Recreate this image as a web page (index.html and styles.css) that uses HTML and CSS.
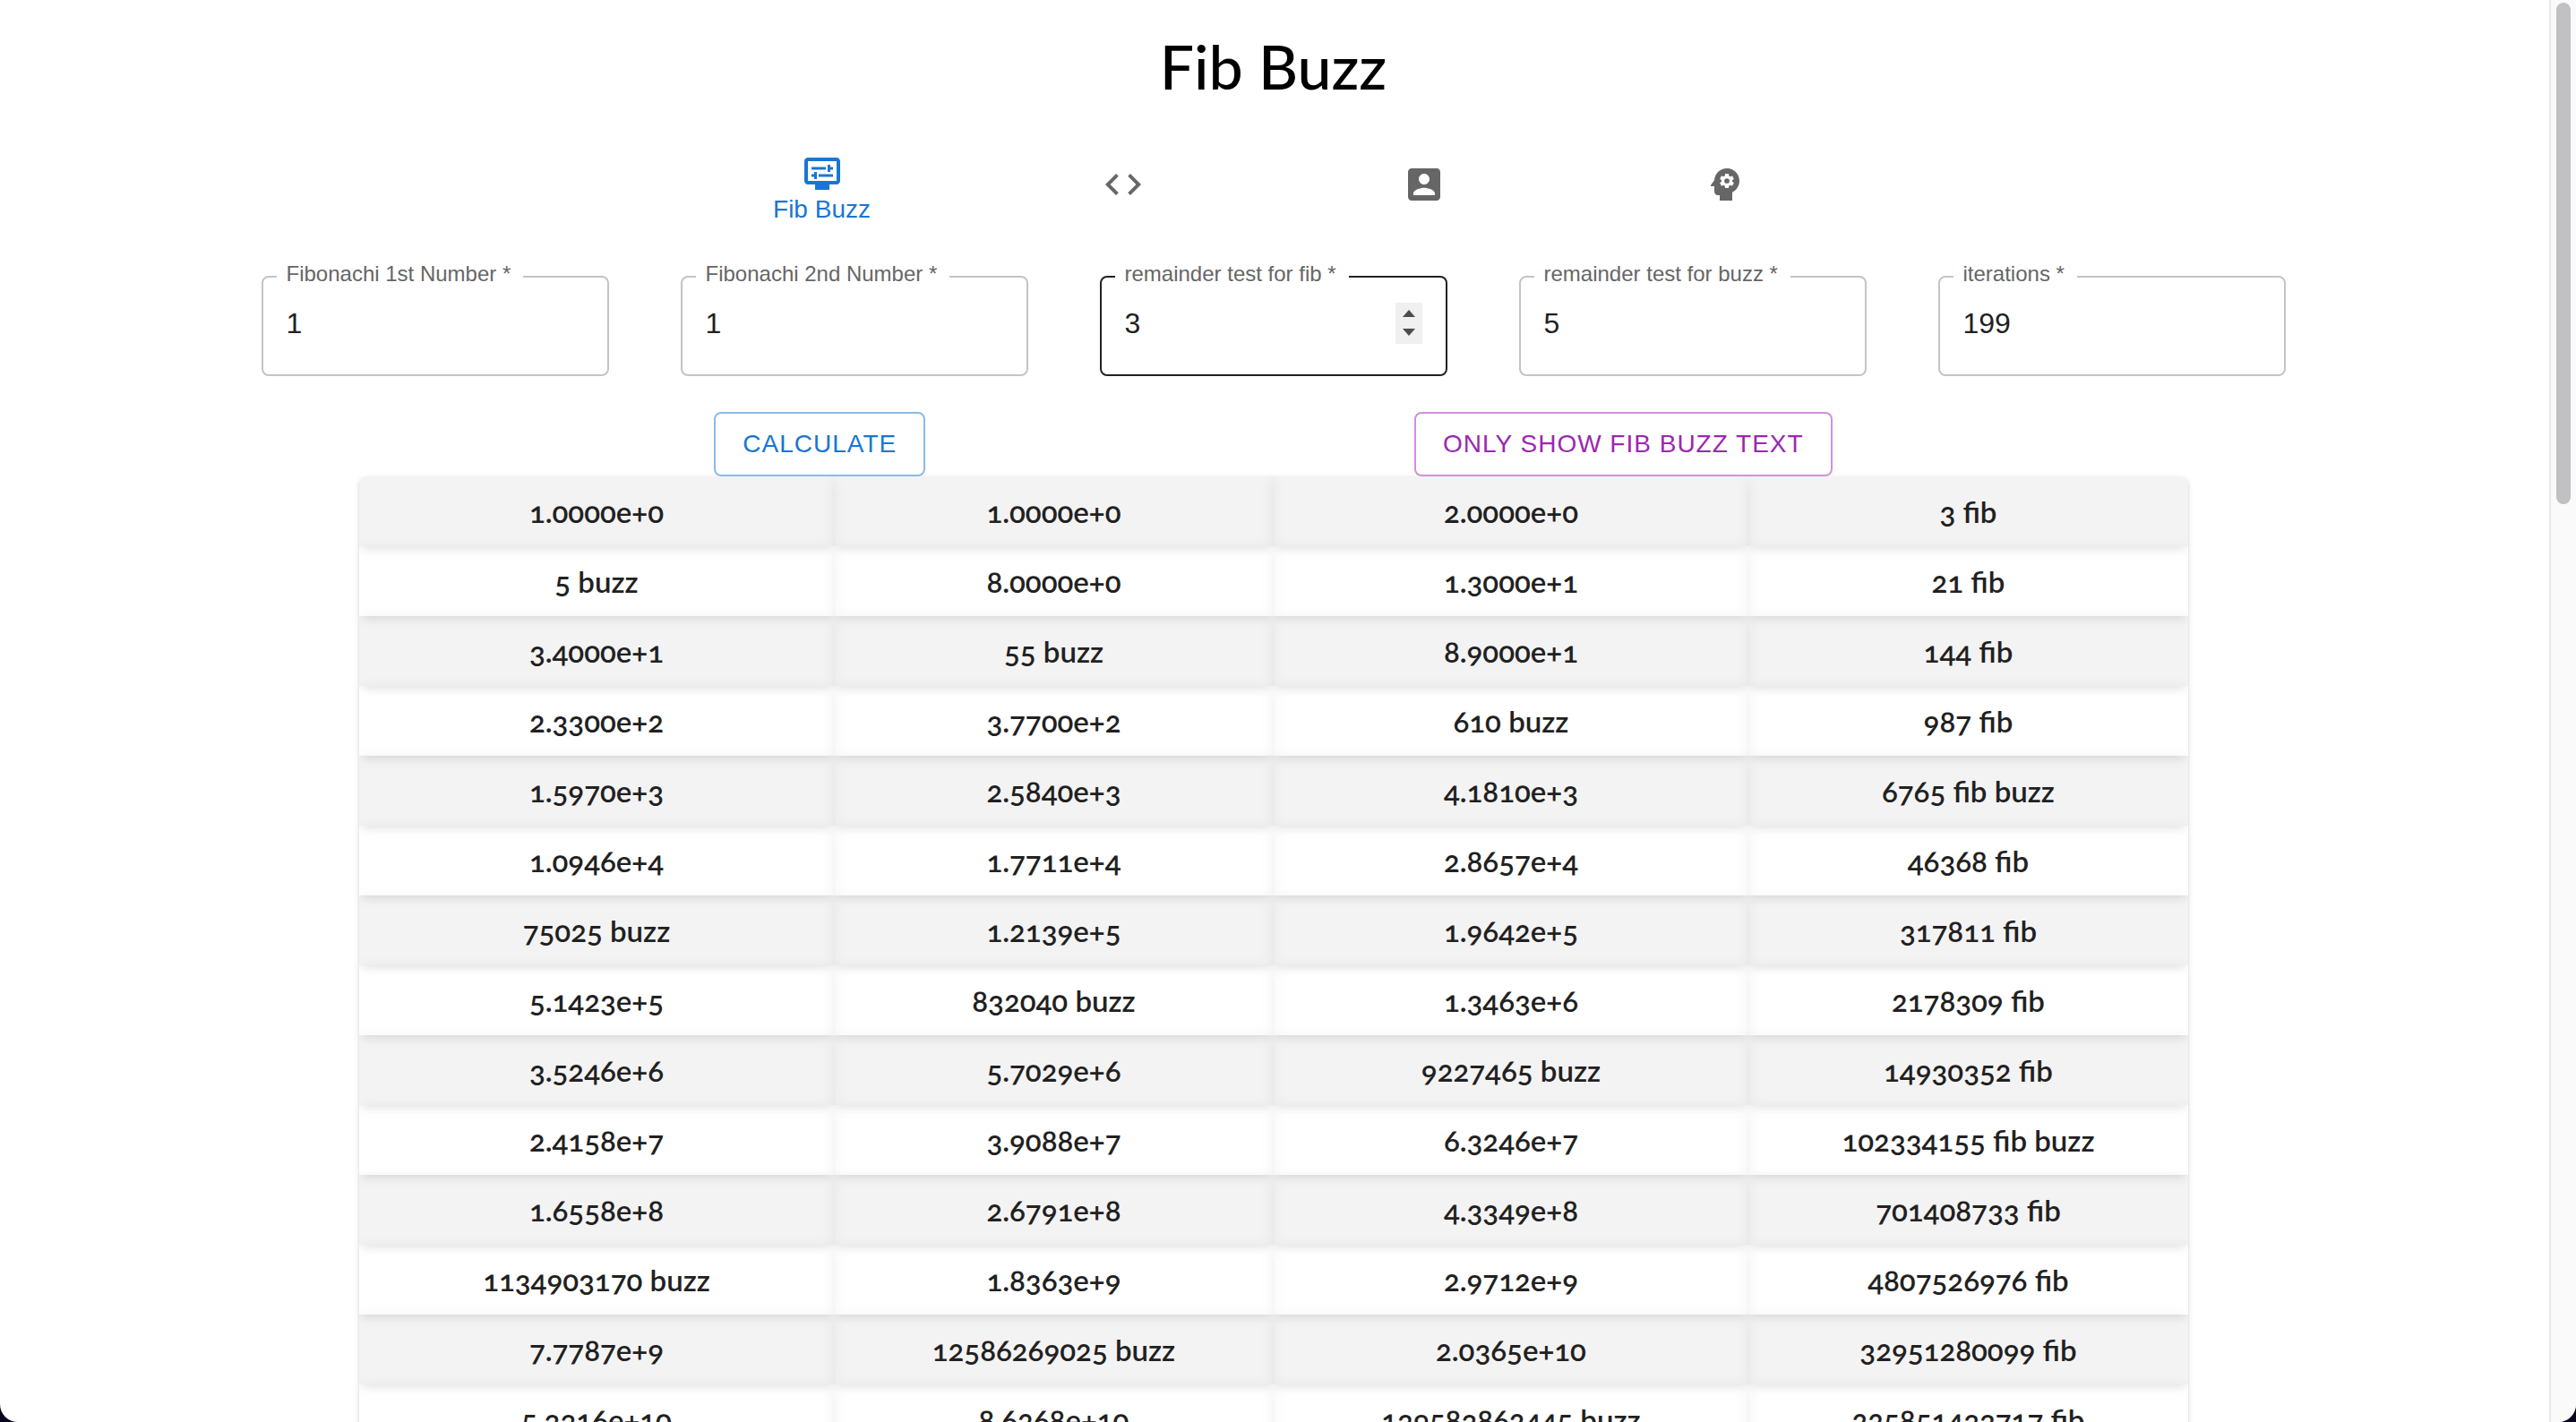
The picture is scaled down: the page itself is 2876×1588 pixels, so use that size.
FILE: index.html
```html
<!DOCTYPE html>
<html lang="en">
<head>
<meta charset="utf-8">
<title>Fib Buzz</title>
<link rel="stylesheet" href="styles.css">
</head>
<body>
<div class="window">
  <main class="page">
    <h1 class="title">Fib Buzz</h1>

    <nav class="nav">
      <button class="nav-item selected" type="button">
        <svg class="icon" viewBox="0 0 24 24" aria-hidden="true"><path fill-rule="evenodd" d="M20 3H4c-1.1 0-2 .9-2 2v11c0 1.1.9 2 2 2h4v3h8v-3h4c1.1 0 2-.9 2-2V5c0-1.1-.9-2-2-2zm0 13H4V5h16v11z"/><path d="M6 8.25h8v1.5H6zM16.500 9.750H18v-1.500h-1.500V7H15v4h1.500zM10 12.250h8v1.500h-8zM7.500 15H9v-4H7.500v1.250H6v1.500h1.500z"/></svg>
        <span class="nav-label">Fib Buzz</span>
      </button>
      <button class="nav-item" type="button" aria-label="Code">
        <svg class="icon" viewBox="0 0 24 24" aria-hidden="true"><path d="M9.400 16.600 4.800 12l4.600-4.600L8 6l-6 6 6 6 1.400-1.400zm5.200 0 4.600-4.600-4.600-4.600L16 6l6 6-6 6-1.400-1.400z"/></svg>
      </button>
      <button class="nav-item" type="button" aria-label="Profile">
        <svg class="icon" viewBox="0 0 24 24" aria-hidden="true"><path d="M3 5v14c0 1.100.890 2 2 2h14c1.100 0 2-.900 2-2V5c0-1.100-.900-2-2-2H5c-1.110 0-2 .900-2 2zm12 4c0 1.660-1.340 3-3 3s-3-1.340-3-3 1.340-3 3-3 3 1.340 3 3zm-9 8c0-2 4-3.100 6-3.100s6 1.100 6 3.100v1H6v-1z"/></svg>
      </button>
      <button class="nav-item" type="button" aria-label="Skills">
        <svg class="icon" viewBox="0 0 24 24" aria-hidden="true"><circle cx="13" cy="10" r="1.430"/><path d="M13 3C9.250 3 6.200 5.940 6.020 9.640L4.100 12.200c-.41.33-.09.8.4.8H6v3c0 1.100.900 2 2 2h1v3h7v-4.680c2.360-1.120 4-3.530 4-6.320 0-3.870-3.130-7-7-7zm3 7c0 .13-.01.26-.02.39l.83.66c.08.06.1.16.05.25l-.8 1.390c-.05.09-.16.12-.24.09l-.99-.4c-.21.16-.43.29-.67.39L14 13.830c-.01.1-.1.17-.2.17h-1.600c-.1 0-.18-.07-.2-.17l-.15-1.060c-.25-.1-.47-.23-.68-.39l-.99.4c-.09.03-.2 0-.25-.09l-.8-1.390c-.05-.08-.03-.19.05-.25l.84-.66c-.01-.13-.02-.26-.02-.39s.02-.27.04-.39l-.85-.66c-.08-.06-.1-.16-.05-.26l.8-1.380c.05-.09.15-.12.24-.09l1 .4c.2-.15.43-.29.67-.39l.15-1.060c.02-.1.1-.17.2-.17h1.600c.1 0 .18.07.2.17l.15 1.060c.24.1.46.23.67.39l1-.4c.09-.03.2 0 .24.09l.8 1.380c.05.09.03.2-.05.26l-.85.66c.03.12.04.25.04.39z"/></svg>
      </button>
    </nav>

    <form class="form">
      <div class="fields">
        <fieldset class="field">
          <legend><label for="first">Fibonachi 1st Number *</label></legend>
          <input id="first" type="number" value="1">
        </fieldset>
        <fieldset class="field">
          <legend><label for="second">Fibonachi 2nd Number *</label></legend>
          <input id="second" type="number" value="1">
        </fieldset>
        <fieldset class="field hovered">
          <legend><label for="fib">remainder test for fib *</label></legend>
          <div class="input-row">
            <input id="fib" type="number" value="3">
            <span class="spinner" aria-hidden="true">
              <svg viewBox="0 0 30 46"><path d="M8 16 15 8l7 8zM8 29l7 8 7-8z"/></svg>
            </span>
          </div>
        </fieldset>
        <fieldset class="field">
          <legend><label for="buzz">remainder test for buzz *</label></legend>
          <input id="buzz" type="number" value="5">
        </fieldset>
        <fieldset class="field">
          <legend><label for="iterations">iterations *</label></legend>
          <input id="iterations" type="number" value="199">
        </fieldset>
      </div>
      <div class="actions">
        <button class="btn primary" type="button">CALCULATE</button>
        <button class="btn secondary" type="button">ONLY SHOW FIB BUZZ TEXT</button>
      </div>
    </form>

    <div class="results">
      <table>
        <colgroup><col class="c1"><col class="c2"><col class="c3"><col class="c4"></colgroup>
        <tbody>
          <tr><td>1.0000e+0</td><td>1.0000e+0</td><td>2.0000e+0</td><td>3 fib</td></tr>
          <tr><td>5 buzz</td><td>8.0000e+0</td><td>1.3000e+1</td><td>21 fib</td></tr>
          <tr><td>3.4000e+1</td><td>55 buzz</td><td>8.9000e+1</td><td>144 fib</td></tr>
          <tr><td>2.3300e+2</td><td>3.7700e+2</td><td>610 buzz</td><td>987 fib</td></tr>
          <tr><td>1.5970e+3</td><td>2.5840e+3</td><td>4.1810e+3</td><td>6765 fib buzz</td></tr>
          <tr><td>1.0946e+4</td><td>1.7711e+4</td><td>2.8657e+4</td><td>46368 fib</td></tr>
          <tr><td>75025 buzz</td><td>1.2139e+5</td><td>1.9642e+5</td><td>317811 fib</td></tr>
          <tr><td>5.1423e+5</td><td>832040 buzz</td><td>1.3463e+6</td><td>2178309 fib</td></tr>
          <tr><td>3.5246e+6</td><td>5.7029e+6</td><td>9227465 buzz</td><td>14930352 fib</td></tr>
          <tr><td>2.4158e+7</td><td>3.9088e+7</td><td>6.3246e+7</td><td>102334155 fib buzz</td></tr>
          <tr><td>1.6558e+8</td><td>2.6791e+8</td><td>4.3349e+8</td><td>701408733 fib</td></tr>
          <tr><td>1134903170 buzz</td><td>1.8363e+9</td><td>2.9712e+9</td><td>4807526976 fib</td></tr>
          <tr><td>7.7787e+9</td><td>12586269025 buzz</td><td>2.0365e+10</td><td>32951280099 fib</td></tr>
          <tr><td>5.3316e+10</td><td>8.6268e+10</td><td>139583862445 buzz</td><td>225851433717 fib</td></tr>
        </tbody>
      </table>
    </div>
  </main>
  <div class="scrollbar" aria-hidden="true"><div class="thumb"></div></div>
</div>
</body>
</html>
```
FILE: styles.css
```css
* { box-sizing: border-box; }

html { background: #0b0620; }

body {
  margin: 0;
  font-family: "Liberation Sans", Arial, sans-serif;
  color: #212121;
}

.window {
  display: flex;
  height: 100vh;
  overflow: hidden;
  background: #fff;
  border-radius: 0 0 20px 20px;
}

.page {
  flex: 1;
  min-width: 0;
  padding-right: 3px;
}

.title {
  margin: 0;
  padding: 34px 0 36px;
  font-family: Lato, sans-serif;
  font-size: 68px;
  font-weight: 500;
  line-height: 80px;
  text-align: center;
  color: #000;
}

/* Navigation */
.nav {
  display: flex;
  justify-content: center;
  height: 112px;
}

.nav-item {
  display: flex;
  flex: 0 1 336px;
  flex-direction: column;
  align-items: center;
  justify-content: center;
  padding: 0;
  border: 0;
  background: none;
  font-family: inherit;
  color: #666;
}

.nav-item.selected {
  padding-top: 8px;
  color: #1976d2;
}

.icon {
  width: 48px;
  height: 48px;
  fill: currentColor;
}

.nav-label {
  font-size: 28px;
  line-height: 32px;
}

/* Form */
.form {
  max-width: 2340px;
  margin: 32px auto 0;
}

.fields {
  display: flex;
  gap: 80px;
  padding: 0 40px;
}

.field {
  flex: 1;
  min-width: 0;
  margin: 0;
  padding: 0 26px 20px;
  border: 2px solid #c4c4c4;
  border-radius: 8px;
}

.field.hovered { border-color: #212121; }

.field legend {
  margin-left: -11px;
  padding: 0 14px 6px 11px;
  font-size: 24px;
  line-height: 24px;
  color: #666;
}

.field input {
  display: block;
  width: 100%;
  min-width: 0;
  height: 74px;
  padding: 0;
  border: 0;
  outline: 0;
  background: none;
  font-family: inherit;
  font-size: 32px;
  color: #212121;
  appearance: textfield;
}

.input-row {
  display: flex;
  align-items: center;
}

.spinner {
  flex: none;
  width: 30px;
  height: 46px;
  background: #f1f0f1;
}

.spinner svg {
  display: block;
  fill: #4d4d4d;
}

.actions {
  display: flex;
  justify-content: space-evenly;
  margin-top: 40px;
}

.btn {
  height: 72px;
  padding: 0 30px;
  border: 2px solid;
  border-radius: 8px;
  background: #fff;
  font-family: inherit;
  font-size: 28px;
  letter-spacing: 1px;
}

.btn.primary {
  border-color: #8cbae8;
  color: #1976d2;
}

.btn.secondary {
  border-color: #cd93d7;
  color: #9c27b0;
}

/* Results */
.results {
  max-width: 2042px;
  margin: 0 auto;
  overflow: hidden;
  border-radius: 8px;
  box-shadow: 0 2px 2px rgba(0, 0, 0, .14), 0 2px 6px rgba(0, 0, 0, .12);
}

table {
  width: 100%;
  border-spacing: 0;
  table-layout: fixed;
  font-family: Lato, sans-serif;
  font-size: 33px;
  font-weight: 600;
  font-variant-numeric: oldstyle-nums;
  text-align: center;
}

.c1 { width: 26%; }
.c2 { width: 24%; }
.c3 { width: 26%; }
.c4 { width: 24%; }

tr:nth-child(odd) { background: #f4f3f4; }

/* Plain rows sit above the striped ones so that their shadow falls on the next row */
tr:nth-child(even) {
  position: relative;
  z-index: 1;
}

td {
  height: 78px;
  padding: 0;
  box-shadow: 0 2px 16px rgba(0, 0, 0, .06), 0 8px 8px -4px rgba(0, 0, 0, .06);
}

/* Window scrollbar */
.scrollbar {
  width: 30px;
  padding: 3px 6px;
  border-left: 2px solid #e8e8e8;
  background: #fafafa;
}

.thumb {
  width: 16px;
  height: 560px;
  border-radius: 8px;
  background: #c1c0c2;
}
```
